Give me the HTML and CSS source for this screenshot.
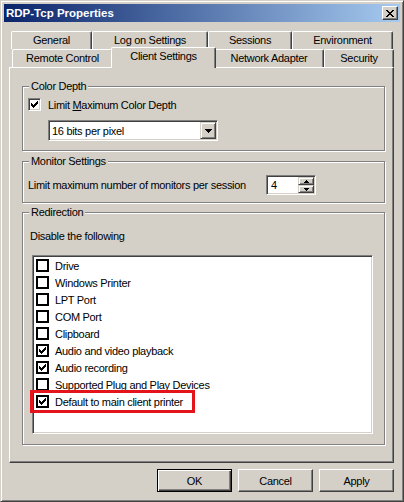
FILE: index.html
```html
<!DOCTYPE html>
<html lang="en">

<head>
    <meta charset="UTF-8">
    <title>RDP-Tcp Properties</title>
    <link rel="stylesheet" href="styles.css">
</head>

<body>
    <svg class="defs" width="0" height="0">
        <symbol id="tick" viewBox="0 0 7 7">
            <path d="M6 0h1v1h-1z M5 1h2v1h-2z M0 2h1v1h-1z M4 2h3v1h-3z M0 3h2v1h-2z M3 3h3v1h-3z M0 4h5v1h-5z M1 5h3v1h-3z M2 6h1v1h-1z" fill="#000"/>
        </symbol>
    </svg>

    <div class="window">
        <div class="titlebar">
            <span class="title">RDP-Tcp Properties</span>
            <span class="close-btn">
                <svg width="8" height="7" viewBox="0 0 8 7" shape-rendering="crispEdges">
                    <path d="M0 0h2v1h-2z M6 0h2v1h-2z M1 1h2v1h-2z M5 1h2v1h-2z M2 2h4v1h-4z M3 3h2v1h-2z M2 4h4v1h-4z M1 5h2v1h-2z M5 5h2v1h-2z M0 6h2v1h-2z M6 6h2v1h-2z" fill="#000"/>
                </svg>
            </span>
        </div>

        <div class="dialog-body">
            <div class="tab-row back">
                <div class="tab" style="width:81px">General</div>
                <div class="tab" style="width:116px">Log on Settings</div>
                <div class="tab" style="width:84px">Sessions</div>
                <div class="tab" style="width:101px">Environment</div>
            </div>
            <div class="tab-row front">
                <div class="tab" style="width:101px">Remote Control</div>
                <div class="tab active" style="width:105px">Client Settings</div>
                <div class="tab" style="width:110px">Network Adapter</div>
                <div class="tab" style="width:70px">Security</div>
            </div>

            <div class="panel">
                <div class="group color-group">
                    <div class="group-label">Color Depth</div>
                    <div class="check-row">
                        <span class="checkbox"><svg width="7" height="7"><use href="#tick"/></svg></span>
                        <span>Limit <u>M</u>aximum Color Depth</span>
                    </div>
                    <div class="combo">
                        <span class="combo-value">16 bits per pixel</span>
                        <span class="combo-arrow">
                            <svg width="7" height="4" viewBox="0 0 7 4" shape-rendering="crispEdges">
                                <path d="M0 0h7v1h-7z M1 1h5v1h-5z M2 2h3v1h-3z M3 3h1v1h-1z" fill="#000"/>
                            </svg>
                        </span>
                    </div>
                </div>

                <div class="group monitor-group">
                    <div class="group-label">Monitor Settings</div>
                    <div class="monitor-row">
                        <span class="monitor-text">Limit maximum number of monitors per session</span>
                        <div class="spin">
                            <span class="spin-value">4</span>
                            <div class="spin-btns">
                                <span class="spin-btn">
                                    <svg width="5" height="3" viewBox="0 0 5 3" shape-rendering="crispEdges"><path d="M2 0h1v1h-1z M1 1h3v1h-3z M0 2h5v1h-5z" fill="#000"/></svg>
                                </span>
                                <span class="spin-btn">
                                    <svg width="5" height="3" viewBox="0 0 5 3" shape-rendering="crispEdges"><path d="M0 0h5v1h-5z M1 1h3v1h-3z M2 2h1v1h-1z" fill="#000"/></svg>
                                </span>
                            </div>
                        </div>
                    </div>
                </div>

                <div class="group redirect-group">
                    <div class="group-label">Redirection</div>
                    <div class="list-caption">Disable the following</div>
                    <div class="listbox">
                        <div class="item"><span class="lbox"></span>Drive</div>
                        <div class="item"><span class="lbox"></span>Windows Printer</div>
                        <div class="item"><span class="lbox"></span>LPT Port</div>
                        <div class="item"><span class="lbox"></span>COM Port</div>
                        <div class="item"><span class="lbox"></span>Clipboard</div>
                        <div class="item"><span class="lbox"><svg width="7" height="7"><use href="#tick"/></svg></span>Audio and video playback</div>
                        <div class="item"><span class="lbox"><svg width="7" height="7"><use href="#tick"/></svg></span>Audio recording</div>
                        <div class="item"><span class="lbox"></span>Supported Plug and Play Devices</div>
                        <div class="item marked"><span class="lbox"><svg width="7" height="7"><use href="#tick"/></svg></span>Default to main client printer</div>
                    </div>
                </div>
            </div>

            <div class="buttons">
                <button class="btn default">OK</button>
                <button class="btn">Cancel</button>
                <button class="btn">Apply</button>
            </div>
        </div>
    </div>
</body>

</html>
```

FILE: styles.css
```css
* {
    box-sizing: border-box;
}

body {
    margin: 0;
    background: #d4d0c8;
    font-family: "Liberation Sans", Arial, sans-serif;
    font-size: 11px;
    letter-spacing: -0.3px;
    color: #000;
}

.defs {
    position: absolute;
    width: 0;
    height: 0;
}

.window {
    width: 404px;
    height: 502px;
    padding: 3px;
    border: 1px solid;
    border-color: #d4d0c8 #404040 #404040 #d4d0c8;
    box-shadow: inset 1px 1px #fff, inset -1px -1px #808080;
}

/* title bar */
.titlebar {
    height: 18px;
    display: flex;
    align-items: center;
    justify-content: space-between;
    padding: 0 2px;
    background: linear-gradient(to right, #0a246a, #a6caf0);
}

.title {
    color: #fff;
    font-weight: bold;
    font-size: 11.5px;
    letter-spacing: 0;
}

.close-btn {
    width: 16px;
    height: 14px;
    display: flex;
    align-items: center;
    justify-content: center;
    background: #d4d0c8;
    border: 1px solid;
    border-color: #fff #404040 #404040 #fff;
    box-shadow: inset -1px -1px #808080;
}

.dialog-body {
    padding: 9px 6px 0 5px;
}

/* tabs */
.tab-row {
    display: flex;
    align-items: flex-end;
    height: 18px;
}

.tab-row.back {
    padding-left: 2px;
}

.tab-row.front {
    padding-left: 3px;
}

.tab {
    flex: none;
    height: 18px;
    line-height: 16px;
    text-align: center;
    background: #d4d0c8;
    border-top: 1px solid #fff;
    border-left: 1px solid #fff;
    border-right: 1px solid #404040;
    border-radius: 2px 2px 0 0;
    box-shadow: inset -1px 0 #808080;
}

.tab.active {
    position: relative;
    z-index: 1;
    height: 21px;
    line-height: 17px;
    margin: 0 -2px -1px;
}

.panel {
    height: 396px;
    padding: 18px 8px 0 12px;
    border-top: 1px solid #fff;
    border-left: 1px solid #fff;
    border-right: 1px solid #404040;
    border-bottom: 1px solid #404040;
    box-shadow: inset -1px -1px #808080;
}

/* group boxes */
.group {
    padding: 0 5px;
    border: 1px solid #808080;
    box-shadow: inset 1px 1px #fff, 1px 1px #fff;
}

.group-label {
    width: fit-content;
    margin: -7px 0 0 1px;
    padding: 0 2px;
    line-height: 13px;
    background: #d4d0c8;
}

.color-group {
    height: 65px;
}

.monitor-group {
    height: 42px;
    margin-top: 10px;
}

.redirect-group {
    height: 233px;
    margin-top: 9px;
}

.check-row {
    display: flex;
    align-items: center;
    gap: 7px;
    height: 13px;
    margin-top: 5px;
}

.checkbox {
    width: 13px;
    height: 13px;
    display: flex;
    align-items: center;
    justify-content: center;
    background: #fff;
    border: 1px solid;
    border-color: #808080 #fff #fff #808080;
    box-shadow: inset 1px 1px #404040, inset -1px -1px #d4d0c8;
}

.combo {
    width: 170px;
    height: 21px;
    margin: 9px 0 0 20px;
    display: flex;
    align-items: center;
    padding: 1px 1px 1px 3px;
    background: #fff;
    border: 1px solid;
    border-color: #808080 #fff #fff #808080;
    box-shadow: inset 1px 1px #404040, inset -1px -1px #d4d0c8;
}

.combo-value {
    flex: 1;
}

.combo-arrow {
    width: 16px;
    height: 17px;
    display: flex;
    align-items: center;
    justify-content: center;
    background: #d4d0c8;
    border: 1px solid;
    border-color: #d4d0c8 #404040 #404040 #d4d0c8;
    box-shadow: inset 1px 1px #fff, inset -1px -1px #808080;
}

.monitor-row {
    display: flex;
    align-items: center;
    margin-top: 7px;
}

.monitor-text {
    width: 238px;
}

.spin {
    width: 50px;
    height: 20px;
    display: flex;
    padding: 1px;
    background: #fff;
    border: 1px solid;
    border-color: #808080 #fff #fff #808080;
    box-shadow: inset 1px 1px #404040, inset -1px -1px #d4d0c8;
}

.spin-value {
    flex: 1;
    padding-left: 3px;
    line-height: 16px;
}

.spin-btns {
    width: 16px;
    display: flex;
    flex-direction: column;
}

.spin-btn {
    flex: 1;
    display: flex;
    align-items: center;
    justify-content: center;
    background: #d4d0c8;
    border: 1px solid;
    border-color: #d4d0c8 #404040 #404040 #d4d0c8;
    box-shadow: inset 1px 1px #fff, inset -1px -1px #808080;
}

/* redirection list */
.list-caption {
    margin: 11px 0 0 2px;
    line-height: 13px;
}

.listbox {
    width: 341px;
    height: 179px;
    margin: 12px 0 0 4px;
    padding: 1px 0 0 3px;
    background: #fff;
    border: 1px solid;
    border-color: #808080 #fff #fff #808080;
    box-shadow: inset 1px 1px #404040, inset -1px -1px #d4d0c8;
}

.item {
    display: flex;
    align-items: center;
    gap: 6px;
    height: 17px;
}

.item.marked {
    width: fit-content;
    margin-left: -3px;
    padding: 0 9px 0 3px;
    outline: 3px solid #e3141c;
}

.lbox {
    width: 13px;
    height: 13px;
    display: flex;
    align-items: center;
    justify-content: center;
    background: #fff;
    border: 2px solid #000;
}

/* bottom buttons */
.buttons {
    display: flex;
    justify-content: flex-end;
    gap: 6px;
    margin-top: 6px;
}

.btn {
    width: 75px;
    height: 23px;
    padding: 0;
    font: inherit;
    letter-spacing: inherit;
    color: #000;
    background: #d4d0c8;
    border: 1px solid;
    border-color: #fff #404040 #404040 #fff;
    box-shadow: inset -1px -1px #808080;
}

.btn.default {
    border-color: #000;
    box-shadow: inset 1px 1px #fff, inset -1px -1px #404040, inset -2px -2px #808080;
}
```
